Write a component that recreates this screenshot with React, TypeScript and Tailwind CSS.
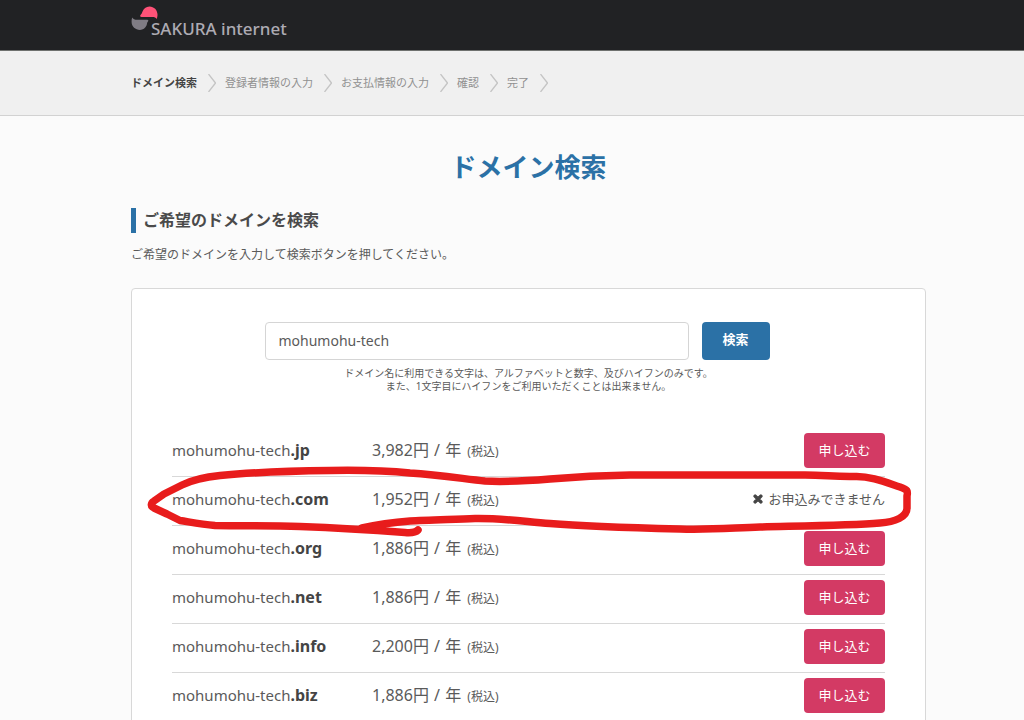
import { useState } from "react";
import { FaTimes } from "react-icons/fa";

const STEPS = ["ドメイン検索", "登録者情報の入力", "お支払情報の入力", "確認", "完了"];

const DOMAINS = [
  { tld: ".jp", price: "3,982", available: true },
  { tld: ".com", price: "1,952", available: false },
  { tld: ".org", price: "1,886", available: true },
  { tld: ".net", price: "1,886", available: true },
  { tld: ".info", price: "2,200", available: true },
  { tld: ".biz", price: "1,886", available: true },
];

function Logo() {
  return (
    <a href="#" className="flex items-start">
      <svg width="20" height="24" viewBox="0 0 20 24" className="overflow-visible" aria-hidden="true">
        <path d="M10.500 11C9.300 11 8.800 10 9.500 9C10.500 8 10.800 7.500 11.300 6C12.500 2.500 15 .4 18.500 .4C23 .4 26.500 4 26.500 8.500C26.500 10.200 26.300 11.500 25.600 13C24.800 11.400 23.500 11 21.500 11Z" fill="#ff5278" />
        <path d="M1.200 11.500C2 13.300 4 13.800 6 13.800H16.300C17.300 13.800 17.700 14.500 17 15.500C15.800 16.500 16.300 17.500 15.500 19.500C14.300 22.300 12 23.900 9 23.900C4.300 23.900 .7 20.500 .6 16C.5 14.200 .7 12.800 1.200 11.500Z" fill="#7f7c84" />
      </svg>
      <span className="mt-[13px] text-[17px] leading-5 font-medium text-[#adabb3]">SAKURA internet</span>
    </a>
  );
}

function Chevron() {
  return (
    <svg width="8" height="18" viewBox="0 0 8 18" fill="none" stroke="#c4c4c4" strokeWidth="1.300" className="ml-[11px] mr-[9px]" aria-hidden="true">
      <path d="M.5 0L7.500 9L.5 18" />
    </svg>
  );
}

// hand-drawn circle around the .com row
function Marker() {
  return (
    <svg
      width="780"
      height="80"
      viewBox="0 0 780 80"
      fill="none"
      stroke="#e81c1c"
      strokeWidth="7.500"
      strokeLinecap="round"
      strokeLinejoin="round"
      className="absolute -left-8 top-8 pointer-events-none overflow-visible"
      aria-hidden="true"
    >
      <path
        d="M278 70C275 73 270 73 265 72.500C245 71 200 68 160 66.500C130 65.500 105 66 75 65.500C60 64 50 62 40 60.500L27 54L14 48
           C10 46 11 43 14 41L24 34L42 25C52 20 65 17 80 15.500C110 12.500 150 11 190 10.500C220 10 250 11 270 13
           C300 15 325 19 345 21C365 22.500 385 21 410 19C440 16.500 460 15.500 490 15H665C685 15 695 17 715 16.500
           C730 16 745 22 760 27C768 30 768 31 767 36V48C767 57 755 62 740 63C710 65.500 660 66 620 67
           C590 68 570 70 540 69C500 68 440 66 410 63.500C380 61 360 58 335 58.500C310 59.500 285 60 270 61C250 62.500 235 65 222 68"
      />
    </svg>
  );
}

export default function App() {
  const [name, setName] = useState("mohumohu-tech");

  return (
    <div className="min-h-screen bg-[#fbfbfb] font-['Noto_Sans','Noto_Sans_CJK_JP',sans-serif] text-[#5a5a5a]">
      <header className="h-[51px] bg-[#212224] border-b border-[#6f716f] pl-[131px] pt-1.5">
        <Logo />
      </header>

      <nav className="h-[65px] bg-[#f0f0f0] border-b border-[#d2d2d2] pl-[131px]">
        <ol className="flex items-center h-16 text-[11px]">
          {STEPS.map((step, i) => (
            <li key={step} className={`flex items-center ${i === 0 ? "font-bold text-[#444]" : "text-[#909090]"}`}>
              {step}
              <Chevron />
            </li>
          ))}
        </ol>
      </nav>

      <main className="pl-[131px] pr-[98px] pt-[31px]">
        <h1 className="text-center text-[26px] leading-10 font-bold text-[#2b71a6]">ドメイン検索</h1>

        <h2 className="mt-[21px] border-l-[5px] border-[#2b71a6] pl-[7px] text-base leading-[25px] font-bold text-[#4a4a4a]">
          ご希望のドメインを検索
        </h2>
        <p className="mt-[13px] text-xs leading-[18px]">ご希望のドメインを入力して検索ボタンを押してください。</p>

        <section className="mt-6 rounded-sm border border-[#d8d8d8] bg-white px-10 pt-[33px] pb-16">
          <form onSubmit={(e) => e.preventDefault()} className="flex justify-center gap-[13px] pr-[23px]">
            <input
              type="text"
              aria-label="ドメイン名"
              value={name}
              onChange={(e) => setName(e.target.value)}
              className="w-[424px] h-[38px] rounded-sm border border-[#d5d5d5] px-[13px] pb-0.5 text-sm outline-none"
            />
            <button type="submit" className="w-[68px] h-[38px] rounded-sm bg-[#2b71a6] pb-0.5 text-[13px] font-bold text-white">
              検索
            </button>
          </form>
          <p className="mt-[7px] text-center text-[10px] leading-[13px]">
            ドメイン名に利用できる文字は、アルファベットと数字、及びハイフンのみです。
            <br />
            また、1文字目にハイフンをご利用いただくことは出来ません。
          </p>

          <div className="relative mt-[35px]">
            <table className="w-full border-separate border-spacing-0 leading-6">
              <tbody>
                {DOMAINS.map((d) => (
                  <tr key={d.tld}>
                    <td className="w-[200px] h-[49px] p-0 pb-1 border-b border-[#d8d8d8] text-[15px]">
                      mohumohu-tech<b className="text-base text-[#444]">{d.tld}</b>
                    </td>
                    <td className="p-0 pb-1 border-b border-[#d8d8d8] text-base">
                      {d.price}円 <span className="mx-px">/</span> 年 <span className="ml-0.5 text-xs">(税込)</span>
                    </td>
                    <td className="p-0 pb-[3px] border-b border-[#d8d8d8] text-right text-[13px]">
                      {d.available ? (
                        <button type="button" className="block ml-auto w-[81px] h-[35px] rounded-sm bg-[#d33a64] pb-0.5 text-white">
                          申し込む
                        </button>
                      ) : (
                        <span className="inline-flex items-center gap-1">
                          <FaTimes className="size-3 stroke-[#444] stroke-[50] text-[#444]" />
                          お申込みできません
                        </span>
                      )}
                    </td>
                  </tr>
                ))}
              </tbody>
            </table>
            <Marker />
          </div>
        </section>
      </main>
    </div>
  );
}
